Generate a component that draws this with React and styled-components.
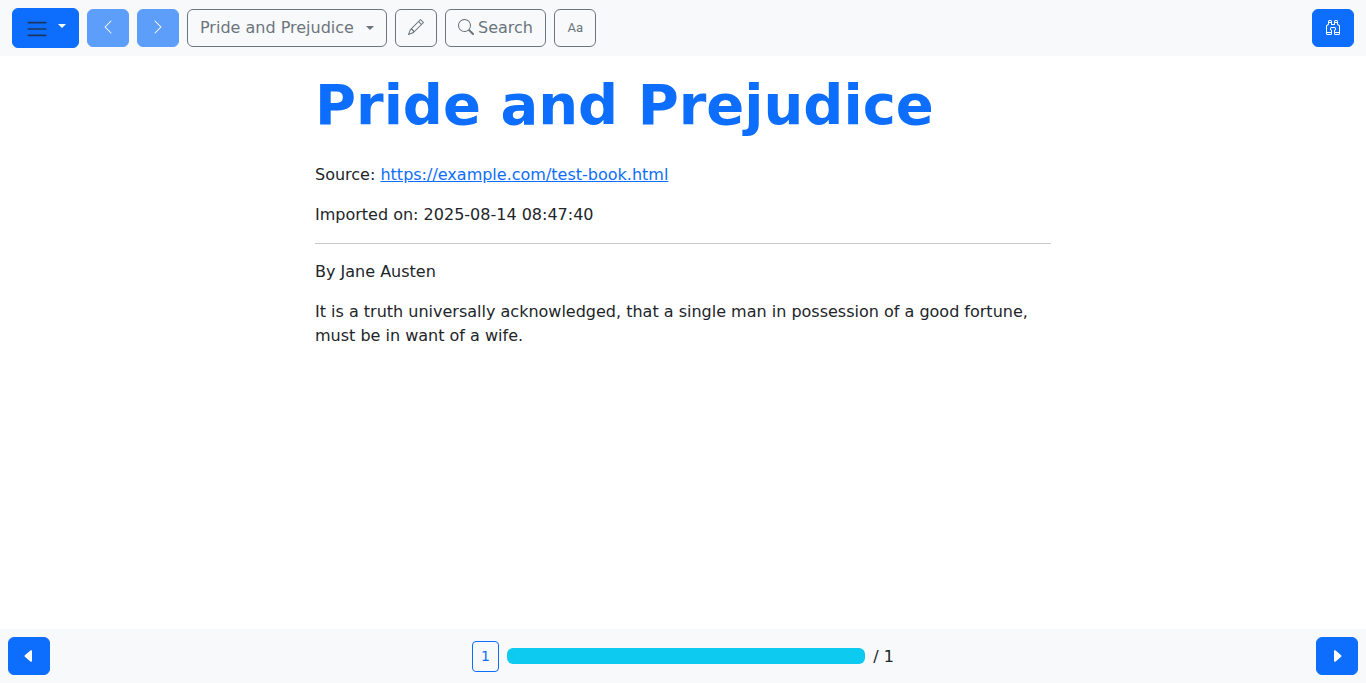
import React, { useState } from "react";
import styled, { createGlobalStyle, css } from "styled-components";
import {
  BsBinoculars,
  BsCaretLeftFill,
  BsCaretRightFill,
  BsChevronLeft,
  BsChevronRight,
  BsPencil,
  BsSearch,
} from "react-icons/bs";

const blue = "#0d6efd";
const gray = "#6c757d";
const ink = "#212529";
const light = "#f8f9fa";

const GlobalStyle = createGlobalStyle`
  *, *::before, *::after { box-sizing: border-box; }
  body {
    margin: 0;
    background: #fff;
    color: ${ink};
    font: 16px/24px "DejaVu Sans", sans-serif;
  }
`;

const Reader = styled.div`
  display: flex;
  flex-direction: column;
  min-height: 100vh;
`;

const Spacer = styled.div`
  flex: 1;
`;

const variants = {
  primary: css`
    color: #fff;
    background: ${blue};
    border-color: ${blue};
  `,
  outline: css`
    color: ${gray};
    background: transparent;
    border-color: ${gray};
  `,
};

const Button = styled.button`
  display: inline-flex;
  align-items: center;
  gap: 4px;
  height: 38px;
  padding: 0 12px;
  border: 1px solid;
  border-radius: 6px;
  font: inherit;
  cursor: pointer;
  ${({ $variant }) => variants[$variant || "primary"]}

  &:disabled {
    opacity: 0.65;
    cursor: default;
  }

  svg {
    flex: none;
    width: 16px;
    height: 16px;
  }
`;

const ToolButton = styled(Button)`
  svg {
    margin-bottom: 2px;
  }
`;

const Toolbar = styled.header`
  display: flex;
  align-items: center;
  gap: 8px;
  padding: 8px 12px;
  background: ${light};
`;

const MenuButton = styled(Button)`
  align-items: flex-start;
  gap: 9px;
  height: 40px;
  padding-top: 8px;

  svg {
    width: 24px;
    height: 24px;
  }
`;

const Caret = styled.span`
  border-top: 4px solid;
  border-left: 4px solid transparent;
  border-right: 4px solid transparent;
`;

const MenuCaret = styled(Caret)`
  margin-top: 7px;
`;

const ChapterPicker = styled.label`
  display: grid;
  grid-template-columns: 200px;
  align-items: center;
  color: ${gray};

  & > * {
    grid-area: 1 / 1;
  }
`;

const ChapterSelect = styled.select`
  appearance: none;
  width: 100%;
  height: 38px;
  padding: 0 28px 0 12px;
  border: 1px solid ${gray};
  border-radius: 6px;
  background: transparent;
  color: inherit;
  font: inherit;
  cursor: pointer;
`;

const PickerCaret = styled(Caret)`
  justify-self: end;
  margin-right: 13px;
  pointer-events: none;
`;

const FontLabel = styled.span`
  width: 16px;
  font-family: Roboto, sans-serif;
  font-size: 13px;
  line-height: 16px;
  text-align: right;
`;

const Page = styled.main`
  flex: 1;
  width: 100%;
  max-width: 768px;
  margin: 0 auto;
  padding: 15px 16px;
`;

const Title = styled.h1`
  margin: 0 0 24px;
  color: ${blue};
  font-size: 56px;
  line-height: 68px;
`;

const Paragraph = styled.p`
  margin: 0 0 16px;
`;

const SourceLink = styled.a`
  color: ${blue};
`;

const Rule = styled.hr`
  margin: 16px 0;
  border: 0;
  border-top: 1px solid ${ink};
  opacity: 0.25;
`;

const Footer = styled.footer`
  display: flex;
  align-items: center;
  justify-content: space-between;
  gap: 8px;
  padding: 8px;
  background: ${light};
`;

const Position = styled.div`
  display: flex;
  align-items: center;
  flex: 0 1 422px;
  gap: 8px;
  line-height: 26px;
  white-space: nowrap;
`;

const PageButton = styled.button`
  padding: 4px 8px;
  border: 1px solid ${blue};
  border-radius: 4px;
  background: transparent;
  color: ${blue};
  font: inherit;
  font-size: 14px;
  line-height: 21px;
  cursor: pointer;
`;

const PageCount = styled.span`
  padding-top: 2px;
`;

const Progress = styled.progress`
  appearance: none;
  flex: 1;
  min-width: 0;
  height: 16px;
  border: 0;
  border-radius: 6px;
  overflow: hidden;

  &::-webkit-progress-bar {
    background: #e9ecef;
  }

  &::-webkit-progress-value {
    background: #0dcaf0;
  }
`;

const MenuIcon = () => (
  <svg viewBox="0 0 30 30" aria-hidden="true">
    <path
      d="M4 7h22M4 15h22M4 23h22"
      stroke="rgba(33, 37, 41, 0.75)"
      strokeWidth="2"
      strokeLinecap="round"
      strokeMiterlimit="10"
    />
  </svg>
);

const chapters = ["Pride and Prejudice"];

export default function App() {
  const [chapter, setChapter] = useState(chapters[0]);

  return (
    <Reader>
      <GlobalStyle />
      <Toolbar>
        <MenuButton aria-label="Menu">
          <MenuIcon />
          <MenuCaret />
        </MenuButton>
        <ToolButton disabled aria-label="Previous chapter">
          <BsChevronLeft />
        </ToolButton>
        <ToolButton disabled aria-label="Next chapter">
          <BsChevronRight />
        </ToolButton>
        <ChapterPicker>
          <ChapterSelect
            aria-label="Chapter"
            value={chapter}
            onChange={(event) => setChapter(event.target.value)}
          >
            {chapters.map((name) => (
              <option key={name}>{name}</option>
            ))}
          </ChapterSelect>
          <PickerCaret />
        </ChapterPicker>
        <ToolButton $variant="outline" aria-label="Edit">
          <BsPencil />
        </ToolButton>
        <ToolButton $variant="outline">
          <BsSearch />
          Search
        </ToolButton>
        <ToolButton $variant="outline" aria-label="Font settings">
          <FontLabel>Aa</FontLabel>
        </ToolButton>
        <Spacer />
        <ToolButton aria-label="Look up">
          <BsBinoculars />
        </ToolButton>
      </Toolbar>

      <Page>
        <Title>Pride and Prejudice</Title>
        <Paragraph>
          Source:{" "}
          <SourceLink href="https://example.com/test-book.html">
            https://example.com/test-book.html
          </SourceLink>
        </Paragraph>
        <Paragraph>Imported on: 2025-08-14 08:47:40</Paragraph>
        <Rule />
        <Paragraph>By Jane Austen</Paragraph>
        <Paragraph>
          It is a truth universally acknowledged, that a single man in
          possession of a good fortune, must be in want of a wife.
        </Paragraph>
      </Page>

      <Footer>
        <Button aria-label="Previous page">
          <BsCaretLeftFill />
        </Button>
        <Position>
          <PageButton aria-label="Go to page">1</PageButton>
          <Progress value={1} max={1} aria-label="Reading progress" />
          <PageCount>/ 1</PageCount>
        </Position>
        <Button aria-label="Next page">
          <BsCaretRightFill />
        </Button>
      </Footer>
    </Reader>
  );
}
